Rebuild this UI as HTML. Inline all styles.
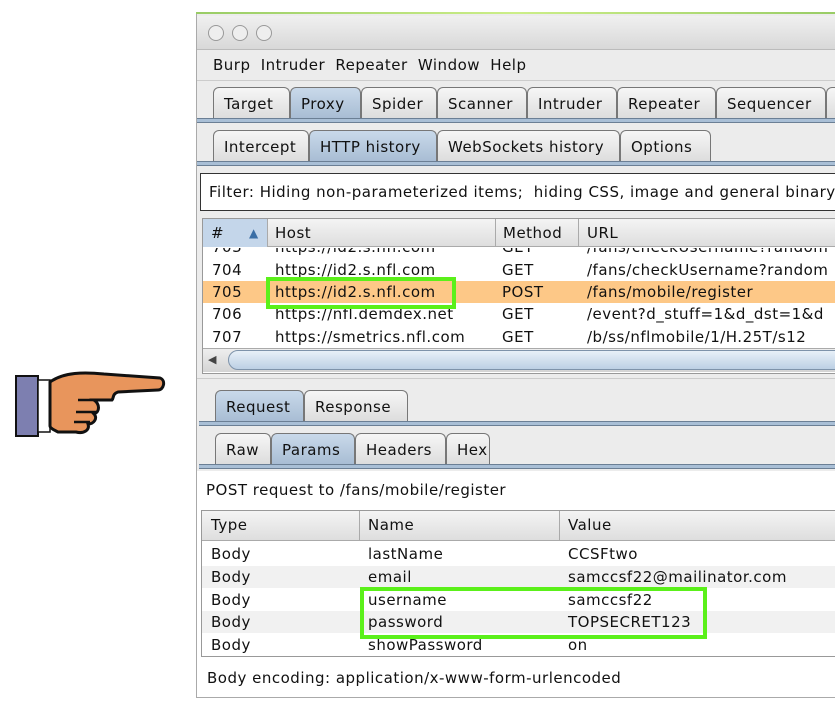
<!DOCTYPE html>
<html><head><meta charset="utf-8"><style>
*{margin:0;padding:0;box-sizing:border-box}
body{width:835px;height:706px;background:#fff;position:relative;overflow:hidden;font-family:"DejaVu Sans","Liberation Sans",sans-serif;font-size:15px;letter-spacing:0.5px;color:#111}
.a{position:absolute}
.win{left:196px;top:14px;width:639px;height:684px;background:#ececec;border-left:1px solid #aaa;border-bottom:1px solid #aaa}
.tab{position:absolute;height:32px;border:1px solid #777;border-bottom:none;border-radius:6px 6px 0 0;background:linear-gradient(#f6f6f6,#dcdcdc);padding:7px 10px 0;white-space:nowrap;overflow:hidden}
.tab.sel{background:linear-gradient(#c9d9ea,#a7bcd3)}
.bar{position:absolute;height:5px;background:#a9bfd6;border-top:1px solid #6b7f95;border-bottom:1px solid #6b7f95}
.row{position:absolute;height:22px;white-space:nowrap;line-height:22px}
.row span{position:absolute}
.grn{position:absolute;border:4px solid #5bf01a}
</style></head><body>
<div class="a" style="left:196px;top:12px;width:639px;height:4px;background:linear-gradient(90deg,#9c6,#ce8,#9c6)"></div>
<div class="a win"></div>
<div class="a" style="left:197px;top:16px;width:638px;height:34px;background:linear-gradient(#f0f0f0,#d8d8d8);border-bottom:1px solid #bbb"></div>
<div class="a" style="left:208px;top:25px;width:16px;height:16px;border:1px solid #999;border-radius:50%;background:#eee"></div>
<div class="a" style="left:232px;top:25px;width:16px;height:16px;border:1px solid #999;border-radius:50%;background:#eee"></div>
<div class="a" style="left:256px;top:25px;width:16px;height:16px;border:1px solid #999;border-radius:50%;background:#eee"></div>
<div class="a" style="left:213px;top:56px;white-space:nowrap;word-spacing:5px">Burp Intruder Repeater Window Help</div>
<div class="a" style="left:197px;top:80px;width:638px;height:1px;background:#ccc"></div>
<div class="tab" style="left:213px;top:87px;width:77px">Target</div>
<div class="tab sel" style="left:290px;top:87px;width:71px">Proxy</div>
<div class="tab" style="left:361px;top:87px;width:76px">Spider</div>
<div class="tab" style="left:437px;top:87px;width:90px">Scanner</div>
<div class="tab" style="left:527px;top:87px;width:90px">Intruder</div>
<div class="tab" style="left:617px;top:87px;width:99px">Repeater</div>
<div class="tab" style="left:716px;top:87px;width:110px">Sequencer</div>
<div class="tab" style="left:826px;top:87px;width:20px"></div>
<div class="bar" style="left:197px;top:118px;width:638px"></div>
<div class="tab" style="left:213px;top:130px;width:96px">Intercept</div>
<div class="tab sel" style="left:309px;top:130px;width:128px">HTTP history</div>
<div class="tab" style="left:437px;top:130px;width:183px">WebSockets history</div>
<div class="tab" style="left:620px;top:130px;width:91px">Options</div>
<div class="bar" style="left:197px;top:161px;width:638px"></div>
<div class="a" style="left:200px;top:173px;width:640px;height:38px;background:#fff;border:1px solid #333;padding:9px 8px;white-space:nowrap;overflow:hidden">Filter: Hiding non-parameterized items;&nbsp; hiding CSS, image and general binary</div>
<div class="a" style="left:202px;top:218px;width:640px;height:156px;background:#fff;border:1px solid #999"></div>
<div class="a" style="left:203px;top:219px;width:640px;height:28px;background:linear-gradient(#f4f4f4,#dedede);border-bottom:1px solid #aaa"></div>
<div class="a" style="left:203px;top:219px;width:64px;height:28px;background:#c4d6ea"></div>
<div class="row" style="left:203px;top:222px;width:640px"><span style="left:8px">#</span><span style="left:46px;color:#3a6ea5;font-size:12px">▲</span><span style="left:72px">Host</span><span style="left:300px">Method</span><span style="left:384px">URL</span></div>
<div class="a" style="left:267px;top:219px;width:1px;height:28px;background:#aaa"></div>
<div class="a" style="left:495px;top:219px;width:1px;height:28px;background:#aaa"></div>
<div class="a" style="left:578px;top:219px;width:1px;height:28px;background:#aaa"></div>
<div class="a" style="left:203px;top:248px;width:636px;height:100px;overflow:hidden">
<div class="row" style="top:-12px;width:640px"><span style="left:9px">703</span><span style="left:72px">https://id2.s.nfl.com</span><span style="left:299px">GET</span><span style="left:384px">/fans/checkUsername?random</span></div>
<div class="row" style="top:11px;width:640px"><span style="left:9px">704</span><span style="left:72px">https://id2.s.nfl.com</span><span style="left:299px">GET</span><span style="left:384px">/fans/checkUsername?random</span></div>
<div class="row" style="top:33px;width:640px;background:#fdc887"><span style="left:9px">705</span><span style="left:72px">https://id2.s.nfl.com</span><span style="left:299px">POST</span><span style="left:384px">/fans/mobile/register</span></div>
<div class="row" style="top:55px;width:640px"><span style="left:9px">706</span><span style="left:72px">https://nfl.demdex.net</span><span style="left:299px">GET</span><span style="left:384px">/event?d_stuff=1&amp;d_dst=1&amp;d</span></div>
<div class="row" style="top:78px;width:640px"><span style="left:9px">707</span><span style="left:72px">https://smetrics.nfl.com</span><span style="left:299px">GET</span><span style="left:384px">/b/ss/nflmobile/1/H.25T/s12</span></div>
</div>
<div class="grn" style="left:266px;top:277px;width:190px;height:32px"></div>
<div class="a" style="left:203px;top:348px;width:636px;height:24px;background:linear-gradient(#eee,#d4d4d4);border-top:1px solid #aaa"></div>
<div class="a" style="left:208px;top:353px;font-size:11px;color:#444">◀</div>
<div class="a" style="left:228px;top:350px;width:620px;height:20px;border:1px solid #7e93aa;border-radius:10px;background:linear-gradient(#e8f0f8,#bcd0e4)"></div>
<div class="a" style="left:197px;top:378px;width:638px;height:1px;background:#ccc"></div>
<div class="tab sel" style="left:215px;top:390px;width:89px">Request</div>
<div class="tab" style="left:304px;top:390px;width:104px">Response</div>
<div class="bar" style="left:199px;top:421px;width:636px"></div>
<div class="tab" style="left:215px;top:433px;width:56px">Raw</div>
<div class="tab sel" style="left:271px;top:433px;width:84px">Params</div>
<div class="tab" style="left:355px;top:433px;width:91px">Headers</div>
<div class="tab" style="left:446px;top:433px;width:44px">Hex</div>
<div class="bar" style="left:199px;top:464px;width:636px"></div>
<div class="a" style="left:197px;top:471px;width:638px;height:226px;background:#fff"></div>
<div class="a" style="left:206px;top:481px;white-space:nowrap">POST request to /fans/mobile/register</div>
<div class="a" style="left:201px;top:510px;width:640px;height:147px;background:#fff;border:1px solid #999"></div>
<div class="a" style="left:202px;top:511px;width:640px;height:30px;background:linear-gradient(#f4f4f4,#dedede);border-bottom:1px solid #aaa"></div>
<div class="a" style="left:359px;top:511px;width:1px;height:30px;background:#aaa"></div>
<div class="a" style="left:559px;top:511px;width:1px;height:30px;background:#aaa"></div>
<div class="row" style="left:202px;top:514px;width:640px"><span style="left:9px">Type</span><span style="left:166px">Name</span><span style="left:366px">Value</span></div>
<div class="row" style="left:202px;top:543px;width:640px"><span style="left:9px">Body</span><span style="left:166px">lastName</span><span style="left:366px">CCSFtwo</span></div>
<div class="row" style="left:202px;top:566px;width:640px;background:#f1f1f1"><span style="left:9px">Body</span><span style="left:166px">email</span><span style="left:366px">samccsf22@mailinator.com</span></div>
<div class="row" style="left:202px;top:589px;width:640px"><span style="left:9px">Body</span><span style="left:166px">username</span><span style="left:366px">samccsf22</span></div>
<div class="row" style="left:202px;top:611px;width:640px;background:#f1f1f1"><span style="left:9px">Body</span><span style="left:166px">password</span><span style="left:366px">TOPSECRET123</span></div>
<div class="row" style="left:202px;top:634px;width:640px"><span style="left:9px">Body</span><span style="left:166px">showPassword</span><span style="left:366px">on</span></div>
<div class="grn" style="left:360px;top:587px;width:347px;height:52px"></div>
<div class="a" style="left:207px;top:669px;white-space:nowrap">Body encoding: application/x-www-form-urlencoded</div>
<svg class="a" style="left:14px;top:370px" width="152" height="70" viewBox="0 0 152 70">
<rect x="2" y="6" width="22" height="60" fill="#7d7fb0" stroke="#111" stroke-width="2"/>
<rect x="24" y="10" width="12" height="52" fill="#fff" stroke="#111" stroke-width="1.5"/>
<path d="M36 12 C50 2 70 2 90 4 L146 8 C152 10 150 20 144 20 L104 22 C98 24 100 28 98 30 L80 30 C86 34 86 42 80 44 C84 48 80 54 74 54 C76 60 70 64 62 62 L44 62 C40 60 36 58 36 56 Z" fill="#e8955c" stroke="#111" stroke-width="3"/>
<path d="M64 30 L96 30 M62 42 L82 42 M60 52 L76 52" stroke="#111" stroke-width="2.5" fill="none"/>
</svg>
</body></html>
